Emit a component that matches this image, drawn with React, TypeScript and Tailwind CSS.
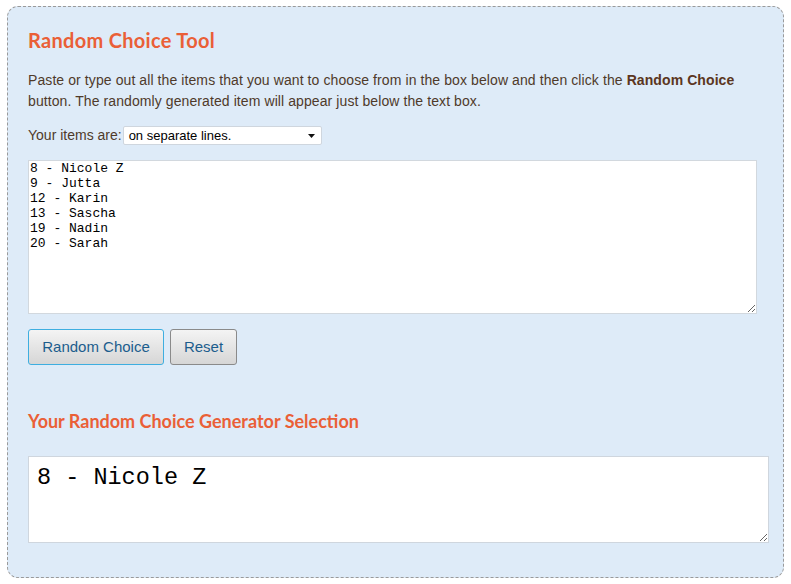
import React, { useState } from "react";

const ITEMS = ["8 - Nicole Z", "9 - Jutta", "12 - Karin", "13 - Sascha", "19 - Nadin", "20 - Sarah"];

export default function App() {
  const [items, setItems] = useState(ITEMS.join("\n"));
  const [choice, setChoice] = useState("8 - Nicole Z");

  const pick = () => {
    const list = items.split("\n").filter((s) => s.trim() !== "");
    if (list.length) setChoice(list[Math.floor(Math.random() * list.length)]);
  };

  return (
    <div className="w-[791px] h-[584px] bg-white pl-[7px] pt-[6px] font-['Liberation_Sans',Arial,sans-serif]">
      <div className="w-[777px] h-[572px] rounded-[11px] border border-dashed border-[#9a9a9a] bg-[#deebf8] pl-[20px] pt-[20px]">
        <h1 className="text-[20px] leading-[26px] tracking-[0.3px] font-bold text-[#ea5f37] font-['Lato','Open_Sans',sans-serif]">
          Random Choice Tool
        </h1>

        <p className="mt-[17px] w-[730px] text-[14px] leading-[21px] tracking-[0.09px] text-[#4f3a2a]">
          Paste or type out all the items that you want to choose from in the box below and then click the{" "}
          <b className="text-[#5b3520]">Random Choice</b> button. The randomly generated item will appear just below the text box.
        </p>

        <div className="mt-[14px] flex items-center h-[19px] text-[14px] text-[#4f3a2a]">
          <span>Your items are:</span>
          <div className="relative ml-[1px] w-[199px] h-[19px] bg-white border border-[#cfd6de] rounded-[2px] flex items-center pl-[5px] text-[13px] text-black">
            on separate lines.
            <svg className="absolute right-[6px] top-[7px]" width="7" height="4" viewBox="0 0 7 4">
              <path d="M0 0h7L3.5 4z" fill="#111" />
            </svg>
          </div>
        </div>

        <textarea
          value={items}
          onChange={(e) => setItems(e.target.value)}
          spellCheck={false}
          className="block mt-[15px] w-[729px] h-[154px] bg-white border border-[#d2d8de] px-[1px] pt-0 text-[13px] leading-[15px] text-black font-['Liberation_Mono','Courier_New',monospace] outline-none"
        />

        <div className="mt-[15px] flex gap-[6px]">
          <button
            onClick={pick}
            className="w-[136px] h-[36px] rounded-[3px] border border-[#3eaee0] bg-gradient-to-b from-[#f4f4f4] to-[#d6d6d6] text-[15px] text-[#1c5d8d]"
          >
            Random Choice
          </button>
          <button
            onClick={() => setItems("")}
            className="w-[67px] h-[36px] rounded-[3px] border border-[#8a8a8a] bg-gradient-to-b from-[#f4f4f4] to-[#d6d6d6] text-[15px] text-[#1c5d8d]"
          >
            Reset
          </button>
        </div>

        <h2 className="mt-[44px] text-[18px] leading-[24px] font-bold text-[#ea5f37] font-['Lato','Open_Sans',sans-serif]">
          Your Random Choice Generator Selection
        </h2>

        <textarea
          value={choice}
          readOnly
          className="block mt-[23px] w-[741px] h-[87px] bg-white border border-[#cfd6de] px-[8px] pt-[8px] text-[23.5px] leading-[26px] text-black font-['Liberation_Mono','Courier_New',monospace] outline-none"
        />
      </div>
    </div>
  );
}
